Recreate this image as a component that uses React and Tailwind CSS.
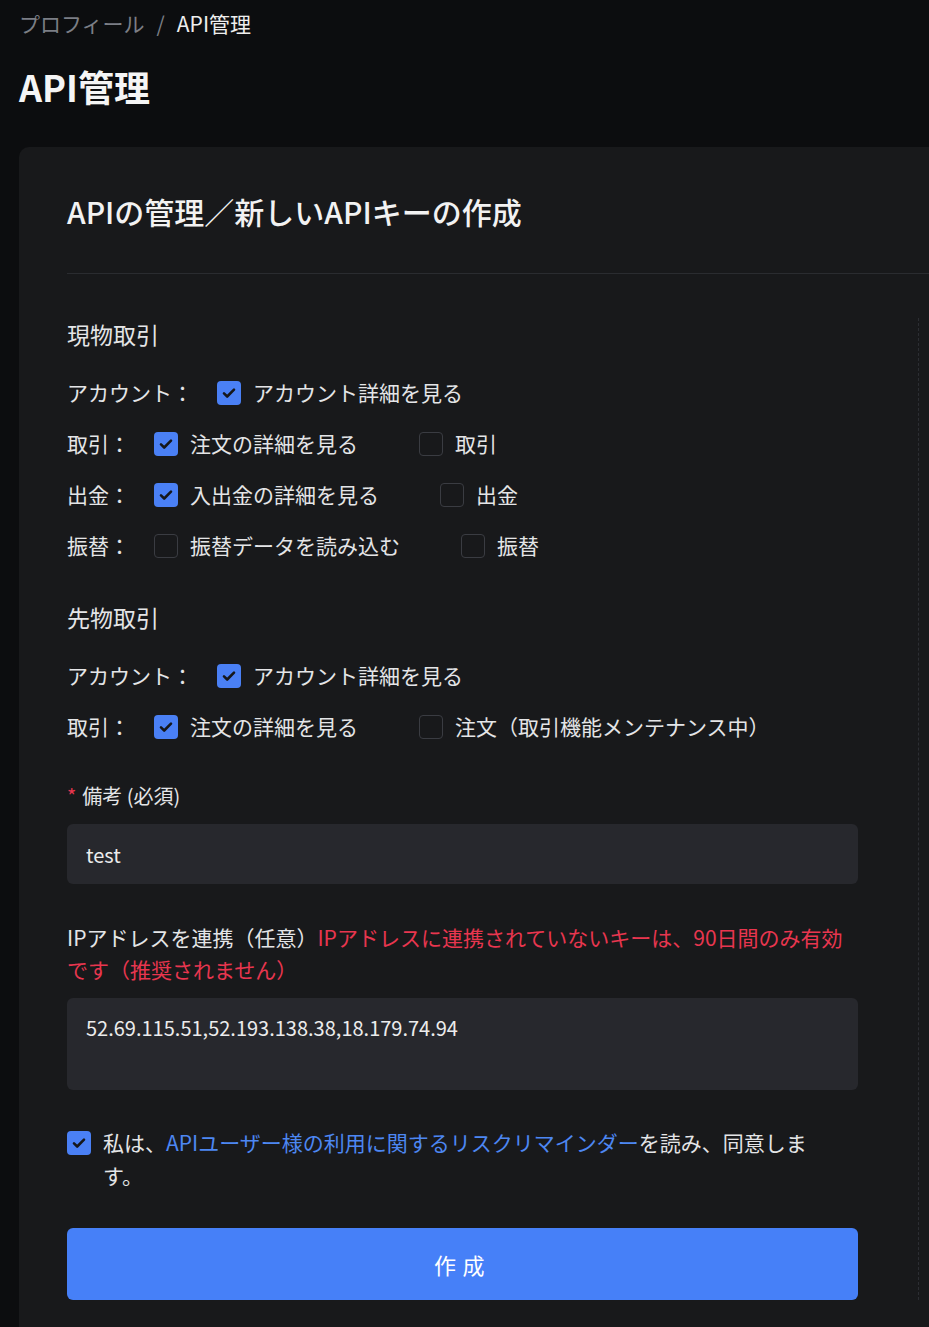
import React, { useState } from 'react';

const font = { fontFamily: '"Noto Sans CJK JP", "Noto Sans", sans-serif' };

const Check = ({ checked, onChange }) => (
  <button
    type="button"
    onClick={onChange}
    className={
      'flex h-[24px] w-[24px] shrink-0 items-center justify-center rounded-[4px] ' +
      (checked ? 'bg-[#4a80f5]' : 'border border-[#3a3c42] bg-transparent')
    }
  >
    {checked && (
      <svg width="16" height="16" viewBox="0 0 16 16" fill="none">
        <path d="M3 8.4l3.2 3.1L13 4.6" stroke="#16171a" strokeWidth="2.6" strokeLinecap="round" strokeLinejoin="round" />
      </svg>
    )}
  </button>
);

const PermRow = ({ label, items, state, toggle }) => (
  <div className="flex h-[51px] items-center">
    <span className="mr-[24px]">{label}</span>
    {items.map((it) => (
      <div key={it.key} className="mr-[61px] flex items-center gap-[12px]">
        <Check checked={state[it.key]} onChange={() => toggle(it.key)} />
        <span>{it.text}</span>
      </div>
    ))}
  </div>
);

const App = () => {
  const [perms, setPerms] = useState({
    spotAccount: true,
    spotOrderView: true,
    spotTrade: false,
    spotWithdrawView: true,
    spotWithdraw: false,
    spotTransferRead: false,
    spotTransfer: false,
    futAccount: true,
    futOrderView: true,
    futOrder: false,
  });
  const [memo, setMemo] = useState('test');
  const [ips, setIps] = useState('52.69.115.51,52.193.138.38,18.179.74.94');
  const [agree, setAgree] = useState(true);

  const toggle = (k) => setPerms((p) => ({ ...p, [k]: !p[k] }));

  return (
    <div style={font} className="min-h-screen overflow-hidden bg-[#0c0d0f] text-[21px] text-[#e4e5e7]">
      <div className="pl-[19px] pt-[9px]">
        <div className="flex h-[28px] items-center text-[21px] leading-[28px]">
          <span className="text-[#7b7e85]">プロフィール</span>
          <span className="mx-[12px] text-[#7b7e85]">/</span>
          <span className="text-[#eeeeee]">API管理</span>
        </div>
        <h1 className="mt-[27px] text-[36px] font-bold leading-[44px] text-[#f5f5f5]">API管理</h1>
      </div>

      <div className="ml-[19px] mt-[39px] w-[960px] rounded-tl-[10px] bg-[#18191b] pb-[40px]">
        <div className="pl-[48px] pt-[44px]">
          <h2 className="text-[30px] font-medium leading-[40px] text-[#f2f2f2]">APIの管理／新しいAPIキーの作成</h2>
          <div className="mt-[42px] border-t border-[#2a2c30]" />
        </div>

        <div className="mt-[44px] flex">
          <div className="w-[839px] pl-[48px]">
            <div className="w-[791px]">
              <h3 className="text-[23px] leading-[32px]">現物取引</h3>
              <div className="mt-[17px]">
                <PermRow label="アカウント：" state={perms} toggle={toggle} items={[{ key: 'spotAccount', text: 'アカウント詳細を見る' }]} />
                <PermRow
                  label="取引："
                  state={perms}
                  toggle={toggle}
                  items={[
                    { key: 'spotOrderView', text: '注文の詳細を見る' },
                    { key: 'spotTrade', text: '取引' },
                  ]}
                />
                <PermRow
                  label="出金："
                  state={perms}
                  toggle={toggle}
                  items={[
                    { key: 'spotWithdrawView', text: '入出金の詳細を見る' },
                    { key: 'spotWithdraw', text: '出金' },
                  ]}
                />
                <PermRow
                  label="振替："
                  state={perms}
                  toggle={toggle}
                  items={[
                    { key: 'spotTransferRead', text: '振替データを読み込む' },
                    { key: 'spotTransfer', text: '振替' },
                  ]}
                />
              </div>

              <h3 className="mt-[30px] text-[23px] leading-[32px]">先物取引</h3>
              <div className="mt-[17px]">
                <PermRow label="アカウント：" state={perms} toggle={toggle} items={[{ key: 'futAccount', text: 'アカウント詳細を見る' }]} />
                <PermRow
                  label="取引："
                  state={perms}
                  toggle={toggle}
                  items={[
                    { key: 'futOrderView', text: '注文の詳細を見る' },
                    { key: 'futOrder', text: '注文（取引機能メンテナンス中）' },
                  ]}
                />
              </div>

              <label className="mt-[30px] block text-[20px] leading-[28px]">
                <span className="mr-[6px] text-[#e8364f]">*</span>備考 (必須)
              </label>
              <input
                value={memo}
                onChange={(e) => setMemo(e.target.value)}
                className="mt-[14px] h-[60px] w-full rounded-[6px] bg-[#27282d] px-[19px] text-[20px] text-[#ececec] outline-none"
              />

              <p className="mt-[37px] leading-[32px]">
                IPアドレスを連携（任意）
                <span className="text-[#e8364f]">IPアドレスに連携されていないキーは、90日間のみ有効です（推奨されません）</span>
              </p>
              <textarea
                value={ips}
                onChange={(e) => setIps(e.target.value)}
                className="mt-[13px] block h-[92px] w-full resize-none rounded-[6px] bg-[#27282d] px-[19px] pt-[16px] text-[20px] leading-[28px] text-[#ececec] outline-none"
              />

              <div className="mt-[36px] flex items-start gap-[12px]">
                <div className="pt-[5px]">
                  <Check checked={agree} onChange={() => setAgree(!agree)} />
                </div>
                <p className="w-[712px] leading-[33px]">
                  私は、<span className="text-[#4d87f2]">APIユーザー様の利用に関するリスクリマインダー</span>を読み、同意します。
                </p>
              </div>

              <button
                type="button"
                className="mt-[36px] h-[72px] w-full rounded-[6px] bg-[#4680f8] text-[22px] tracking-[0.3em] text-white"
              >
                作成
              </button>
            </div>
          </div>
          <div className="ml-[60px] w-0 border-l border-dashed border-[#2c2e33]" />
        </div>
      </div>
    </div>
  );
};

export default App;
